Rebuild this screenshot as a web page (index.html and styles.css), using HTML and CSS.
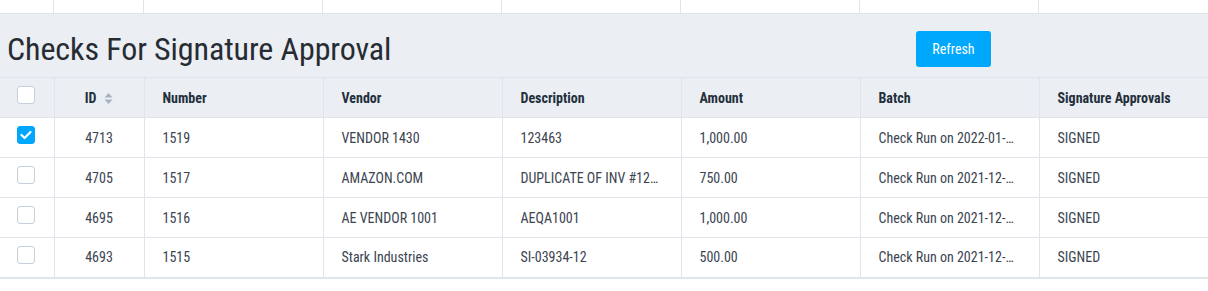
FILE: index.html
```html
<!DOCTYPE html>
<html>
<head>
<meta charset="utf-8">
<link rel="stylesheet" href="styles.css">
</head>
<body>
<div class="prev-row">
  <div class="pc"></div><div class="pc"></div><div class="pc"></div><div class="pc"></div><div class="pc"></div><div class="pc"></div><div class="pc"></div><div class="pc"></div>
</div>
<div class="section">
  <div class="section-head">
    <h1 class="title">Checks For Signature Approval</h1>
    <button class="btn">Refresh</button>
  </div>
  <table class="grid">
    <colgroup>
      <col class="c-check"><col class="c-id"><col class="c-w"><col class="c-w"><col class="c-w"><col class="c-w"><col class="c-w"><col class="c-last">
    </colgroup>
    <thead>
      <tr>
        <th class="cb-cell"><span class="cb"></span></th>
        <th class="center">ID<svg class="sort" width="9" height="13" viewBox="0 0 9 13"><path d="M0.5 5.5 L4.5 1 L8.5 5.5 Z M0.5 7.5 L8.5 7.5 L4.5 12 Z" fill="#a7b3c1"/></svg></th>
        <th>Number</th>
        <th>Vendor</th>
        <th>Description</th>
        <th>Amount</th>
        <th>Batch</th>
        <th>Signature Approvals</th>
      </tr>
    </thead>
    <tbody>
      <tr>
        <td class="cb-cell"><span class="cb checked"><svg width="12" height="10" viewBox="0 0 12 10"><path d="M1.5 5 L4.6 8 L10.5 2" fill="none" stroke="#fff" stroke-width="2.2" stroke-linecap="round" stroke-linejoin="round"/></svg></span></td>
        <td class="center">4713</td>
        <td>1519</td>
        <td>VENDOR 1430</td>
        <td>123463</td>
        <td>1,000.00</td>
        <td>Check Run on 2022-01-…</td>
        <td>SIGNED</td>
      </tr>
      <tr>
        <td class="cb-cell"><span class="cb"></span></td>
        <td class="center">4705</td>
        <td>1517</td>
        <td>AMAZON.COM</td>
        <td>DUPLICATE OF INV #12…</td>
        <td>750.00</td>
        <td>Check Run on 2021-12-…</td>
        <td>SIGNED</td>
      </tr>
      <tr>
        <td class="cb-cell"><span class="cb"></span></td>
        <td class="center">4695</td>
        <td>1516</td>
        <td>AE VENDOR 1001</td>
        <td>AEQA1001</td>
        <td>1,000.00</td>
        <td>Check Run on 2021-12-…</td>
        <td>SIGNED</td>
      </tr>
      <tr>
        <td class="cb-cell"><span class="cb"></span></td>
        <td class="center">4693</td>
        <td>1515</td>
        <td>Stark Industries</td>
        <td>SI-03934-12</td>
        <td>500.00</td>
        <td>Check Run on 2021-12-…</td>
        <td>SIGNED</td>
      </tr>
    </tbody>
  </table>
</div>
</body>
</html>
```
FILE: styles.css
```css
* { box-sizing: border-box; }
html, body { margin: 0; padding: 0; background: #fff; }
body {
  font-family: Roboto, "Liberation Sans", sans-serif;
  font-stretch: 75%;
  color: #3b4450;
  width: 1208px;
}

.prev-row {
  display: grid;
  grid-template-columns: 54px 90px 179px 179px 179px 179px 179px 169px;
  height: 14px;
  border-bottom: 1px solid #dfe5eb;
  background: #fff;
}
.pc { border-right: 1px solid #dfe5eb; }
.pc:last-child { border-right: none; }

.section { background: #ebeef3; }
.section-head {
  height: 63px;
  display: flex;
  align-items: center;
  justify-content: space-between;
  padding: 6px 217px 0 7px;
}
.title {
  margin: 0;
  font-size: 32px;
  font-weight: 400;
  color: #272c33;
  letter-spacing: -0.08px;
}
.btn {
  width: 75px;
  height: 36px;
  border: none;
  border-radius: 3px;
  background: #00a8fd;
  color: #fff;
  font-family: Roboto, "Liberation Sans", sans-serif;
  font-stretch: 75%;
  font-size: 14px;
  padding: 0;
}

.grid {
  width: 1208px;
  border-collapse: collapse;
  table-layout: fixed;
  border-bottom: 2px solid #dfe5eb;
}
.c-check { width: 54px; }
.c-id { width: 90px; }
.c-w { width: 179px; }
.c-last { width: 169px; }

.grid th, .grid td {
  height: 40px;
  padding: 0 0 0 18px;
  text-align: left;
  vertical-align: middle;
  border-top: 1px solid #dfe5eb;
  border-left: 1px solid #dfe5eb;
  white-space: nowrap;
  overflow: hidden;
}
.grid th:first-child, .grid td:first-child { border-left: none; }
.grid th {
  font-size: 14px;
  font-weight: 700;
  color: #232f3c;
  background: #ebeef3;
}
.grid td {
  font-size: 14px;
  font-weight: 400;
  background: #fff;
}
.grid .center { text-align: center; padding-left: 0; }
.grid .cb-cell {
  padding: 8px 0 0 17px;
  vertical-align: top;
}
.cb {
  display: flex;
  align-items: center;
  justify-content: center;
  width: 18px;
  height: 18px;
  border: 1px solid #c6d0db;
  border-radius: 3px;
  background: #fff;
}
.cb.checked {
  background: #00a8fd;
  border-color: #00a8fd;
}
.sort { vertical-align: -2px; margin-left: 8px; }
```
